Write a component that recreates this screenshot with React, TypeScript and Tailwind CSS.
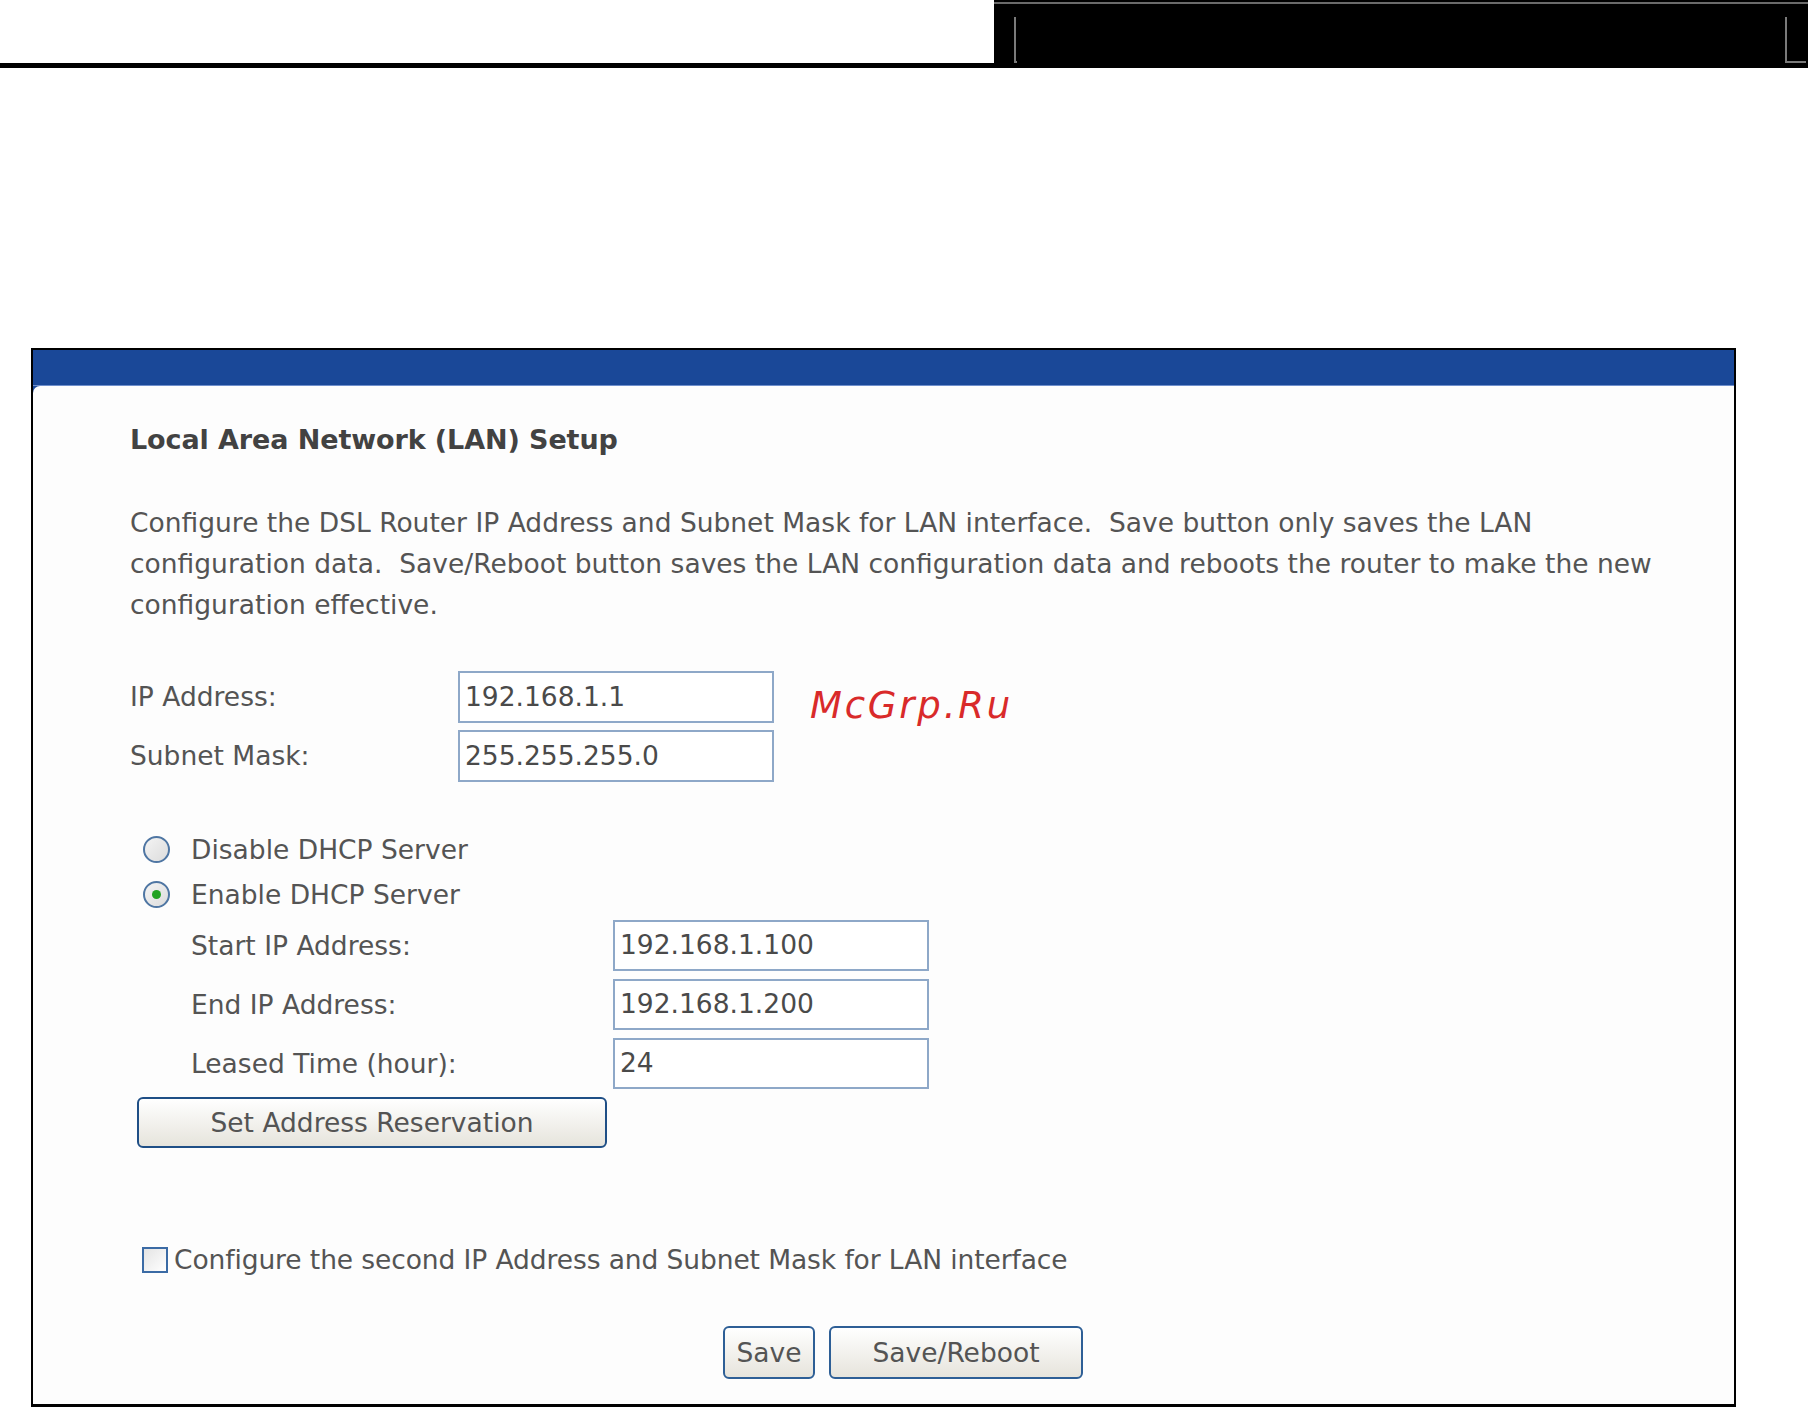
export default function App() {
    const field =
        'h-full border-2 border-[#8ea8c8] bg-white px-[5px] text-[26.5px] leading-none text-[#4a4a4a] flex items-center';

    return (
        <div className="h-[1408px] w-[1808px] overflow-hidden bg-white font-['DejaVu_Sans',sans-serif] text-[#545454]">
            {/* top strip */}
            <div className="flex h-[63px]">
                <div className="flex-1 bg-white"></div>
                <div className="flex w-[814px] flex-col bg-black pt-[2px]">
                    <div className="h-[2px] bg-[#6a6a6a]"></div>
                    <div className="flex flex-1 justify-between pt-[13px] pr-[2px] pl-[20px]">
                        <div className="w-[3px] border-b-2 border-l-2 border-[#7a7a7a]"></div>
                        <div className="w-[21px] border-b-2 border-l-2 border-[#7a7a7a]"></div>
                    </div>
                </div>
            </div>
            <div className="h-[5px] bg-black"></div>

            {/* panel */}
            <div className="mt-[280px] ml-[31px] flex h-[1059px] w-[1705px] flex-col border-x-2 border-t-2 border-b-[3px] border-black bg-[#1a4898]">
                <div className="h-[36px] border-b border-[#6f8fcc] bg-[#1a4898]"></div>
                <div className="flex-1 rounded-tl-[7px] bg-[#fdfdfd] pl-[97px]">
                    <div className="mt-[37px] h-[34px] text-[27px] leading-[34px] font-bold tracking-[-0.1px] text-[#424242]">
                        Local Area Network (LAN) Setup
                    </div>

                    <p className="mt-[45px] text-[26.5px] leading-[41px] whitespace-nowrap">
                        Configure the DSL Router IP Address and Subnet Mask for LAN interface.{'\u00a0 '}Save button only saves the LAN
                        <br />
                        configuration data.{'\u00a0 '}Save/Reboot button saves the LAN configuration data and reboots the router to make the new
                        <br />
                        configuration effective.
                    </p>

                    <div className="mt-[46px] flex flex-col gap-[7px] text-[26.5px]">
                        <div className="flex h-[52px] items-center">
                            <span className="w-[328px]">IP Address:</span>
                            <div className={field + ' w-[316px]'}>192.168.1.1</div>
                            <span className="ml-[36px] pt-[18px] text-[37px] italic tracking-[2.8px] text-[#d92a2a]">
                                McGrp.Ru
                            </span>
                        </div>
                        <div className="flex h-[52px] items-center">
                            <span className="w-[328px]">Subnet Mask:</span>
                            <div className={field + ' w-[316px]'}>255.255.255.0</div>
                        </div>
                    </div>

                    <div className="mt-[45px] flex flex-col text-[26.5px]">
                        <label className="flex h-[45px] items-center">
                            <span className="ml-[13px] h-[27px] w-[27px] rounded-full border-[2.5px] border-[#4f76a3] bg-gradient-to-br from-[#f4f4f4] to-[#dcdcdc]"></span>
                            <span className="ml-[21px]">Disable DHCP Server</span>
                        </label>
                        <label className="flex h-[45px] items-center">
                            <span className="ml-[13px] flex h-[27px] w-[27px] items-center justify-center rounded-full border-[2.5px] border-[#4f76a3] bg-gradient-to-br from-[#f4f4f4] to-[#dcdcdc]">
                                <span className="h-[9px] w-[9px] rounded-full bg-[#22a322]"></span>
                            </span>
                            <span className="ml-[21px]">Enable DHCP Server</span>
                        </label>
                    </div>

                    <div className="mt-[3px] flex flex-col gap-[8px] pl-[61px] text-[26.5px]">
                        {[
                            ['Start IP Address:', '192.168.1.100'],
                            ['End IP Address:', '192.168.1.200'],
                            ['Leased Time (hour):', '24'],
                        ].map(([label, value]) => (
                            <div key={label} className="flex h-[51px] items-center">
                                <span className="w-[422px]">{label}</span>
                                <div className={field + ' w-[316px]'}>{value}</div>
                            </div>
                        ))}
                    </div>

                    <button className="mt-[8px] ml-[7px] h-[51px] w-[470px] rounded-[6px] border-2 border-[#1f4f86] bg-gradient-to-b from-white to-[#e6e4dc] text-[26.5px] text-[#545454]">
                        Set Address Reservation
                    </button>

                    <label className="mt-[97px] flex h-[30px] items-center text-[26.5px]">
                        <span className="ml-[12px] h-[26px] w-[26px] border-2 border-[#3b6ba5] bg-gradient-to-br from-[#e4e4e4] to-white"></span>
                        <span className="ml-[6px] tracking-[-0.1px]">Configure the second IP Address and Subnet Mask for LAN interface</span>
                    </label>

                    <div className="mt-[51px] flex h-[53px] gap-[14px] pl-[593px]">
                        <button className="h-full w-[92px] rounded-[6px] border-2 border-[#2e5f96] bg-gradient-to-b from-white to-[#e6e4dc] text-[26.5px] text-[#545454]">
                            Save
                        </button>
                        <button className="h-full w-[254px] rounded-[6px] border-2 border-[#2e5f96] bg-gradient-to-b from-white to-[#e6e4dc] text-[26.5px] text-[#545454]">
                            Save/Reboot
                        </button>
                    </div>
                </div>
            </div>
        </div>
    );
}
